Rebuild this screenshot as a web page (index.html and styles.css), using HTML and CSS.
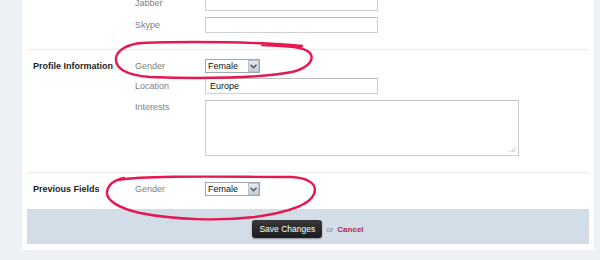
FILE: index.html
```html
<!DOCTYPE html>
<html lang="en">

<head>
    <meta charset="UTF-8">
    <meta name="viewport" content="width=device-width, initial-scale=1.0">
    <title>Edit Profile</title>

    <link rel="stylesheet" href="styles.css">
</head>

<body>
    <main class="panel">
        <section class="group">
            <div class="group-title"></div>
            <div class="fields">
                <div class="row">
                    <label class="label">Jabber</label>
                    <input class="text" type="text">
                </div>
                <div class="row">
                    <label class="label">Skype</label>
                    <input class="text" type="text">
                </div>
            </div>
        </section>

        <section class="group">
            <div class="group-title">Profile Information</div>
            <div class="fields">
                <div class="row row-select">
                    <label class="label">Gender</label>
                    <div class="select">
                        <select>
                            <option>Female</option>
                            <option>Male</option>
                        </select>
                        <span class="select-arrow">
                            <svg width="7" height="5" viewBox="0 0 7 5">
                                <path d="M0.5 0.8 L3.5 3.8 L6.5 0.8" fill="none" stroke="#4a525c" stroke-width="1.4" />
                            </svg>
                        </span>
                    </div>
                </div>
                <div class="row">
                    <label class="label">Location</label>
                    <input class="text" type="text" value="Europe">
                </div>
                <div class="row row-top">
                    <label class="label">Interests</label>
                    <div class="area-wrap">
                        <textarea class="area"></textarea>
                        <svg class="grip" width="6" height="6" viewBox="0 0 6 6">
                            <rect x="4" y="0" width="1" height="1" fill="#b5b5b5" />
                            <rect x="2" y="2" width="1" height="1" fill="#b5b5b5" />
                            <rect x="4" y="2" width="1" height="1" fill="#b5b5b5" />
                            <rect x="0" y="4" width="1" height="1" fill="#b5b5b5" />
                            <rect x="2" y="4" width="1" height="1" fill="#b5b5b5" />
                            <rect x="4" y="4" width="1" height="1" fill="#b5b5b5" />
                        </svg>
                    </div>
                </div>
            </div>
        </section>

        <section class="group">
            <div class="group-title">Previous Fields</div>
            <div class="fields">
                <div class="row row-select">
                    <label class="label">Gender</label>
                    <div class="select">
                        <select>
                            <option>Female</option>
                            <option>Male</option>
                        </select>
                        <span class="select-arrow">
                            <svg width="7" height="5" viewBox="0 0 7 5">
                                <path d="M0.5 0.8 L3.5 3.8 L6.5 0.8" fill="none" stroke="#4a525c" stroke-width="1.4" />
                            </svg>
                        </span>
                    </div>
                </div>
            </div>
        </section>

        <div class="actions">
            <button class="button" type="button">Save Changes</button>
            <span class="or">or</span>
            <a class="cancel" href="#">Cancel</a>
        </div>
    </main>

    <!-- hand drawn marks over the screenshot -->
    <svg class="marks" width="600" height="260" viewBox="0 0 600 260">
        <path d="M302 46 C260 42 190 41 142 43 C128 44 117 50 116 58 C115 68 125 75 150 77 C200 79 262 78 292 72 C308 68 315 60 310 53 C305 47 288 46 262 45"
            fill="none" stroke="#e5194f" stroke-width="2.4" stroke-linecap="round" />
        <path d="M118 180 C150 175 230 177 292 177 C308 178 318 184 314 194 C310 205 290 212 255 217 C220 221 175 220 140 213 C118 208 106 200 107 192 C108 184 114 180 124 178"
            fill="none" stroke="#e5194f" stroke-width="2.4" stroke-linecap="round" />
    </svg>
</body>

</html>
```
FILE: styles.css
```css
body {
    margin: 0;
    height: 260px;
    overflow: hidden;
    position: relative;
    background: #eef1f4;
    font-family: "Liberation Sans", Arial, sans-serif;
    font-size: 9px;
    color: #222;
}

.panel {
    width: 572px;
    margin: -5px 0 0 22px;
    padding: 0 5px 6px;
    box-sizing: border-box;
    background: #fff;
}

.group {
    display: flex;
    padding: 0 0 16px 6px;
    border-top: 1px solid #e8ebef;
}

.group:first-child {
    border-top: 0;
}

.group+.group {
    padding-top: 9px;
}

.group:last-of-type {
    padding-bottom: 13px;
}

.group-title {
    width: 102px;
    flex-shrink: 0;
    font-weight: bold;
    line-height: 14px;
    color: #1d1d1d;
}

.fields {
    display: flex;
    flex-direction: column;
    gap: 6px;
}

.row {
    display: flex;
    align-items: center;
    min-height: 16px;
}

.row-select {
    min-height: 14px;
    margin-bottom: -1px;
}

.row-top {
    align-items: flex-start;
}

.row-top .label {
    padding-top: 2px;
}

.label {
    width: 70px;
    color: #7f7f7f;
    font-size: 9px;
}

.text {
    width: 173px;
    height: 16px;
    box-sizing: border-box;
    margin: 0;
    padding: 0 4px;
    border: 1px solid #cfcfcf;
    border-top-color: #bdbdbd;
    font-family: inherit;
    font-size: 9px;
    color: #111;
    outline: none;
}

.area-wrap {
    position: relative;
    width: 314px;
    height: 56px;
}

.area {
    display: block;
    width: 100%;
    height: 100%;
    box-sizing: border-box;
    margin: 0;
    border: 1px solid #cfcfcf;
    border-top-color: #bdbdbd;
    font-family: inherit;
    font-size: 9px;
    resize: none;
}

.grip {
    position: absolute;
    right: 3px;
    bottom: 3px;
}

.select {
    position: relative;
    width: 55px;
    height: 14px;
}

.select select {
    appearance: none;
    width: 100%;
    height: 100%;
    margin: 0;
    padding: 0 0 0 2px;
    box-sizing: border-box;
    border: 1px solid #a3a8ae;
    background: #fff;
    font-family: inherit;
    font-size: 9px;
    color: #111;
    outline: none;
}

.select-arrow {
    position: absolute;
    top: 1px;
    right: 1px;
    width: 11px;
    height: 12px;
    box-sizing: border-box;
    border: 1px solid #b9c1cb;
    background: linear-gradient(#e6ebf1, #c6ced8);
    display: flex;
    align-items: center;
    justify-content: center;
    pointer-events: none;
}

.actions {
    height: 35px;
    background: #d3dde8;
    display: flex;
    align-items: center;
    justify-content: center;
    gap: 4px;
    font-size: 8px;
}

.button {
    height: 18px;
    padding: 0 7px;
    border: 0;
    border-radius: 3px;
    background: linear-gradient(#383838, #1c1c1c);
    box-shadow: 0 1px 2px rgba(0, 0, 0, 0.35);
    color: #fff;
    font-family: inherit;
    font-size: 8.5px;
    margin-top: 5px;
}

.or {
    color: #8a8f96;
    margin-top: 5px;
}

.cancel {
    color: #b52a3c;
    font-weight: bold;
    text-decoration: none;
    margin-top: 5px;
}

.marks {
    position: absolute;
    top: 0;
    left: 0;
    pointer-events: none;
}
```
